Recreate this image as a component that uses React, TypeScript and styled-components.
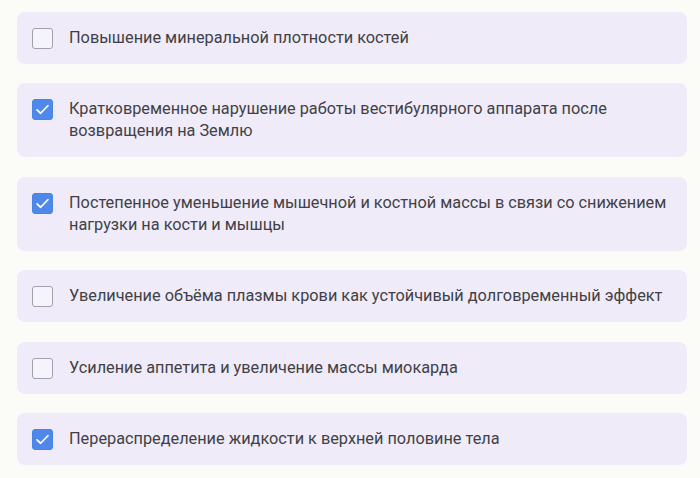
import styled, { createGlobalStyle } from "styled-components";

const options = [
  { text: "Повышение минеральной плотности костей", checked: false },
  {
    text: "Кратковременное нарушение работы вестибулярного аппарата после возвращения на Землю",
    checked: true,
  },
  {
    text: "Постепенное уменьшение мышечной и костной массы в связи со снижением нагрузки на кости и мышцы",
    checked: true,
  },
  {
    text: "Увеличение объёма плазмы крови как устойчивый долговременный эффект",
    checked: false,
  },
  { text: "Усиление аппетита и увеличение массы миокарда", checked: false },
  { text: "Перераспределение жидкости к верхней половине тела", checked: true },
];

const App = () => {
  return (
    <>
      <GlobalStyle />
      <List>
        {options.map((option) => (
          <Option key={option.text}>
            <Box $checked={option.checked}>
              {option.checked && (
                <svg width="15" height="15" viewBox="0 0 16 16" fill="none">
                  <path
                    d="M2.2 8.4 L6 12 L13.8 4"
                    stroke="#fff"
                    strokeWidth="1.9"
                    strokeLinecap="round"
                    strokeLinejoin="round"
                  />
                </svg>
              )}
            </Box>
            <Label>{option.text}</Label>
          </Option>
        ))}
      </List>
    </>
  );
};

export default App;

const GlobalStyle = createGlobalStyle`
  body {
    margin: 0;
    background-color: #fbfbf7;
    font-family: Roboto, "Noto Sans", sans-serif;
  }
`;

const List = styled.div`
  padding: 12px 13px 0 17px;

  display: flex;
  flex-direction: column;
  gap: 19.4px;
`;

const Option = styled.label`
  padding: 15px 15px;
  border-radius: 8px;

  display: flex;
  align-items: flex-start;
  gap: 16px;

  background-color: #efebf9;
`;

const Box = styled.span<{ $checked: boolean }>`
  width: 21px;
  height: 21px;
  margin-top: 1px;
  flex-shrink: 0;
  box-sizing: border-box;

  border: 1.5px solid ${({ $checked }) => ($checked ? "#4a84e4" : "#a3a0aa")};
  border-radius: 3px;

  display: flex;
  align-items: center;
  justify-content: center;

  background-color: ${({ $checked }) => ($checked ? "#4d88ea" : "#f5f3fb")};
`;

const Label = styled.span`
  color: #414145;
  font-size: 16.3px;
  line-height: 22px;
`;
